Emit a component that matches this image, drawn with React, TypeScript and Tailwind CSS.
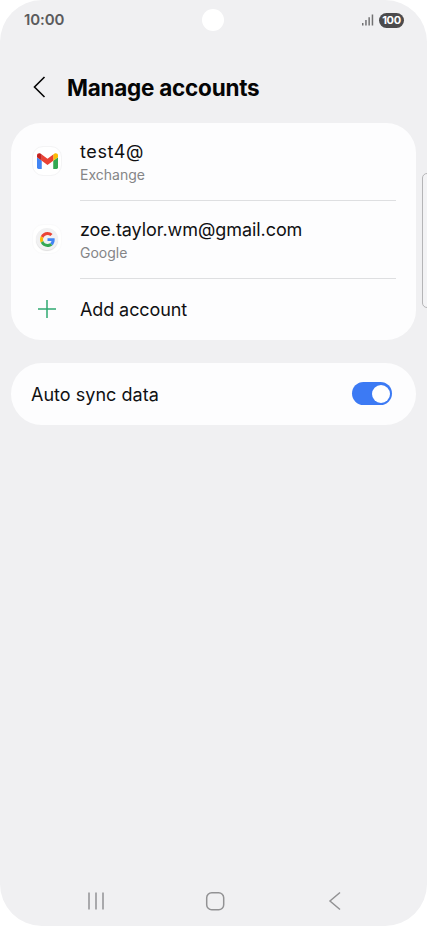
import type { ReactNode } from "react";

function GmailIcon() {
  return (
    <span className="flex size-[30px] items-center justify-center rounded-[11px] border border-[#f4f4f5] bg-white">
      <svg width="21" height="16" viewBox="52 42 88 66">
        <path fill="#4285f4" d="M58 108h14V74L52 59v43c0 3.300 2.700 6 6 6" />
        <path fill="#34a853" d="M120 108h14c3.300 0 6-2.700 6-6V59l-20 15" />
        <path fill="#fbbc04" d="M120 48v26l20-15v-8c0-7.400-8.500-11.600-14.400-7.200" />
        <path fill="#ea4335" d="M72 74V48l24 18 24-18v26L96 92" />
        <path fill="#c5221f" d="M52 51v8l20 15V48l-5.600-4.200C60.500 39.400 52 43.600 52 51" />
      </svg>
    </span>
  );
}

function GoogleIcon() {
  return (
    <span className="flex size-[30px] items-center justify-center rounded-[11px] border border-[#fafafb] bg-white">
      <span className="flex size-[22px] items-center justify-center rounded-full bg-[#f1f1f2] shadow-[0_1px_1px_#dedede]">
        <svg width="15" height="15" viewBox="0 0 48 48">
          <path fill="#ea4335" d="M24 9.500c3.540 0 6.710 1.220 9.210 3.600l6.850-6.850C35.900 2.380 30.470 0 24 0 14.620 0 6.510 5.380 2.560 13.220l7.980 6.190C12.430 13.720 17.740 9.500 24 9.500z" />
          <path fill="#4285f4" d="M46.980 24.550c0-1.570-.15-3.090-.38-4.550H24v9.020h12.940c-.58 2.960-2.260 5.480-4.780 7.180l7.730 6c4.510-4.180 7.090-10.360 7.090-17.650z" />
          <path fill="#fbbc05" d="M10.530 28.590A14.500 14.500 0 0 1 9.770 24c0-1.600.27-3.140.76-4.590l-7.980-6.190A24 24 0 0 0 0 24c0 3.880.92 7.540 2.560 10.780l7.970-6.190z" />
          <path fill="#34a853" d="M24 48c6.480 0 11.930-2.130 15.890-5.810l-7.730-6c-2.150 1.450-4.920 2.300-8.160 2.300-6.260 0-11.570-4.220-13.470-9.910l-7.980 6.190C6.510 42.620 14.620 48 24 48z" />
        </svg>
      </span>
    </span>
  );
}

function StatusBar() {
  return (
    <div className="flex h-10 shrink-0 items-center justify-between pr-[23px] pl-6 text-[#5b5b5d]">
      <span className="text-[15px] font-semibold tracking-[-0.1px]">10:00</span>
      <div className="flex items-center gap-[5px]">
        <svg width="12" height="12" viewBox="0 0 12 12" fill="currentColor">
          <path d="M0 9h1.500v2.500H0zM3.200 6h1.500v5.500H3.200zM6.400 3.300h1.500v8.200H6.400zM9.700.5h1.500v11H9.700z" opacity=".85" />
        </svg>
        <span className="flex h-[15px] w-[25px] items-center justify-center rounded-full bg-[#4b4b4d] text-[11px] font-bold tracking-[-0.3px] text-white">100</span>
      </div>
    </div>
  );
}

function Account({ icon, name, type, spacing }: { icon: ReactNode; name: string; type: string; spacing: string }) {
  return (
    <div className="flex h-[78px] pl-[21px]">
      <div className="w-[48px] pt-[23px]">{icon}</div>
      <div className="mr-5 flex-1 border-b border-[#dedfe1] pt-[17px]">
        <div className={`text-[18px] leading-[23px] whitespace-nowrap ${spacing}`}>{name}</div>
        <div className="pt-px text-[14px] leading-[22px] text-[#858587]">{type}</div>
      </div>
    </div>
  );
}

export default function App() {
  return (
    <div className="h-[926px] w-[427px] bg-white font-['Inter',sans-serif] text-[#101012]">
      <main className="relative flex h-full flex-col overflow-hidden rounded-[42px] bg-[#f0f0f2]">
        <StatusBar />
        <div className="absolute top-[9px] left-[202px] size-[22px] rounded-full bg-white" />
        <header className="flex h-[83px] shrink-0 items-center pt-[11px] pl-[33px]">
          <svg width="34" height="24" viewBox="0 0 34 24" fill="none" stroke="#050505" strokeWidth="1.600">
            <path d="M11.500 2 1.500 12l10 10" />
          </svg>
          <h1 className="pt-px text-[22.5px] font-bold tracking-[-0.25px] text-[#050505]">Manage accounts</h1>
        </header>
        <section className="mr-[11px] ml-[11px] h-[217px] shrink-0 rounded-[30px] bg-[#fdfdfe]">
          <Account icon={<GmailIcon />} name="test4@" type="Exchange" spacing="tracking-[0.6px]" />
          <Account icon={<GoogleIcon />} name="zoe.taylor.wm@gmail.com" type="Google" spacing="tracking-[-0.06px]" />
          <div className="flex h-[60px] items-center pl-[20px]">
            <div className="w-[49px] pl-[6px]">
              <svg width="20" height="20" viewBox="0 0 20 20" fill="none" stroke="#2fa971" strokeWidth="1.500">
                <path d="M1 10h18M10 1v18" />
              </svg>
            </div>
            <span className="pt-px text-[18px] tracking-[-0.1px]">Add account</span>
          </div>
        </section>
        <section className="mx-[11px] mt-[23px] flex h-[62px] shrink-0 items-center justify-between rounded-[31px] bg-[#fdfdfe] pr-6 pl-5">
          <span className="pt-px text-[18px] tracking-[0.03px]">Auto sync data</span>
          <button role="switch" aria-checked="true" aria-label="Auto sync data" className="mb-px flex h-[23px] w-[40px] items-center justify-end rounded-full bg-[#3c7af4] pr-[2px]">
            <span className="size-[18px] rounded-full bg-white" />
          </button>
        </section>
        <div className="absolute top-[173px] left-[422px] h-[135px] w-[10px] rounded-[5px] border border-[#b5b5b7] bg-[#f3f3f5]" />
        <nav className="mt-auto flex h-[50px] shrink-0 items-center pr-[33px] pl-[36px] text-[#929294]">
          <div className="flex flex-1 justify-center">
            <svg width="18" height="20" viewBox="0 0 18 20" stroke="currentColor" strokeWidth="1.500">
              <path d="M2 1.500v17M9 1.500v17M16 1.500v17" />
            </svg>
          </div>
          <div className="flex flex-1 justify-center">
            <svg width="20" height="20" viewBox="0 0 20 20" fill="none" stroke="currentColor" strokeWidth="1.500">
              <rect x="1.700" y="1.700" width="17" height="17" rx="5" />
            </svg>
          </div>
          <div className="flex flex-1 justify-center">
            <svg width="14" height="20" viewBox="0 0 14 20" fill="none" stroke="currentColor" strokeWidth="1.500">
              <path d="M13 1.500 3 10l10 8.500" />
            </svg>
          </div>
        </nav>
      </main>
    </div>
  );
}
